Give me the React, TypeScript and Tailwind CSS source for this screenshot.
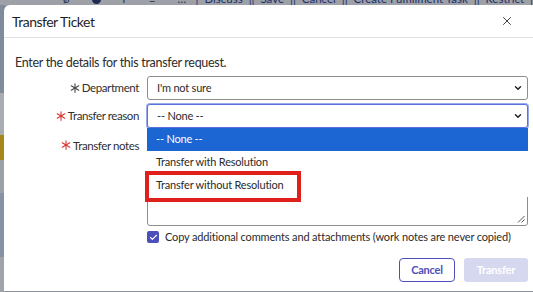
import { ChevronDown, X, Check } from "lucide-react";

function Star({ red }: { red?: boolean }) {
  return (
    <svg width="10" height="10" viewBox="0 0 12 12" className={red ? "text-[#d8322f]" : "text-[#444]"}>
      <g stroke="currentColor" strokeWidth="1.3" strokeLinecap="round">
        <line x1="6" y1="0.8" x2="6" y2="11.2" />
        <line x1="1.5" y1="3.4" x2="10.5" y2="8.6" />
        <line x1="1.5" y1="8.6" x2="10.5" y2="3.4" />
      </g>
    </svg>
  );
}

function Label({ text, red, className }: { text: string; red?: boolean; className?: string }) {
  return (
    <div
      className={
        "w-[143px] shrink-0 flex items-center justify-end gap-[2px] pr-[8px] text-[11.5px] tracking-[-0.4px] text-[#2f2f2f] " +
        (className ?? "")
      }
    >
      <Star red={red} />
      <span>{text}</span>
    </div>
  );
}

function Select({ value, focused }: { value: string; focused?: boolean }) {
  return (
    <div
      className={
        "w-[381px] h-[24px] rounded-[3px] flex items-center justify-between pl-[9px] pr-[4px] text-[11px] tracking-[-0.2px] text-[#2b2b2b] bg-white border " +
        (focused ? "border-[#5b73d9] shadow-[0_0_0_1px_#9aabea]" : "border-[#8d8d8d]")
      }
    >
      <span>{value}</span>
      <ChevronDown size={10} strokeWidth={3.5} className="text-[#222]" />
    </div>
  );
}

export default function App() {
  return (
    <div className="relative w-[533px] h-[292px] overflow-hidden bg-[#8a9097] font-['Lato','Open_Sans',sans-serif]">
      {/* page behind the modal */}
      <div className="absolute left-0 top-[-8px] w-full h-[14px] bg-[#9da1a7] flex items-center whitespace-nowrap text-[11.5px] text-[#1e2f6b]">
        <div className="w-[197px] flex items-center gap-[22px] pl-[63px] text-[#2a2f45]">
          <span>ø</span>
          <span className="w-[9px] h-[9px] rounded-full bg-[#1e2a55]" />
          <span>r</span>
          <span>≡</span>
          <span>…</span>
        </div>
        <div className="flex items-center gap-[6px]">
          <span>|</span>
          <span>Discuss</span>
          <span>||</span>
          <span>Save</span>
          <span>||</span>
          <span>Cancel</span>
          <span>||</span>
          <span>Create Fulfillment Task</span>
          <span>||</span>
          <span>Restrict</span>
          <span>|</span>
        </div>
      </div>
      <div className="absolute left-0 top-[5px] w-[5px] h-[287px] flex flex-col">
        <div className="h-[88px] bg-[#7f8c9c]" />
        <div className="h-[42px] bg-[#a9adb2]" />
        <div className="h-[25px] bg-[#a8871a]" />
        <div className="h-[33px] bg-[#9ca1a7]" />
        <div className="h-[64px] bg-[#8593a5]" />
        <div className="flex-1 bg-[#a0a4a9]" />
      </div>

      {/* modal */}
      <div className="absolute left-[4px] top-[5px] w-[560px] h-[286px] bg-white rounded-tl-[6px] flex flex-col text-[#2b2b2b]">
        <div className="h-[33px] shrink-0 border-b border-[#e2e2e2] flex items-center pl-[8px]">
          <span className="text-[14px] tracking-[-0.5px] text-[#1f1f1f]">Transfer Ticket</span>
          <X size={14} strokeWidth={1.6} className="ml-auto mr-[50px] text-[#333]" />
        </div>

        <div className="pl-[11px] pt-[16px] text-[12.5px] tracking-[-0.3px]">Enter the details for this transfer request.</div>

        <div className="mt-[3px] flex flex-col gap-[4px]">
          <div className="flex items-center">
            <Label text="Department" />
            <Select value="I'm not sure" />
          </div>

          <div className="relative flex items-center">
            <Label text="Transfer reason" red />
            <Select value="-- None --" focused />
            {/* open dropdown list */}
            <div className="absolute left-[143px] top-[24px] w-[381px] z-10 bg-white text-[11px] tracking-[-0.2px]">
              <div className="h-[23px] bg-[#1b66d2] text-white flex items-center pl-[9px]">-- None --</div>
              <div className="h-[23px] flex items-center pl-[9px]">Transfer with Resolution</div>
              <div className="h-[23px] flex items-center pl-[9px]">Transfer without Resolution</div>
            </div>
            <div className="absolute left-[141px] top-[67px] w-[156px] h-[31px] z-20 border-[4px] border-[#e0201b]" />
          </div>

          <div className="flex items-start mt-[1px]">
            <Label text="Transfer notes" red className="mt-[4px]" />
            <div className="relative w-[381px] h-[93px] rounded-[3px] border border-[#8d8d8d] bg-white">
              <svg width="8" height="8" viewBox="0 0 8 8" className="absolute right-[2px] bottom-[2px] text-[#555]">
                <g stroke="currentColor" strokeWidth="1">
                  <line x1="7.5" y1="1" x2="1" y2="7.5" />
                  <line x1="7.5" y1="4.5" x2="4.5" y2="7.5" />
                </g>
              </svg>
            </div>
          </div>
        </div>

        <div className="mt-[3px] pl-[143px] flex items-center gap-[6px] text-[11px] tracking-[-0.15px] whitespace-nowrap">
          <div className="w-[12px] h-[12px] rounded-[2px] bg-[#4d50b8] flex items-center justify-center">
            <Check size={9} strokeWidth={3} className="text-white" />
          </div>
          <span>Copy additional comments and attachments (work notes are never copied)</span>
        </div>

        <div className="mt-[13px] pl-[395px] flex items-center gap-[9px]">
          <button className="w-[56px] h-[24px] rounded-[4px] border border-[#4d50b8] text-[#4d50b8] text-[11px] tracking-[-0.2px] font-bold bg-white">
            Cancel
          </button>
          <button className="w-[64px] h-[24px] rounded-[3px] bg-[#d6d8f0] text-white text-[11px] tracking-[-0.2px] font-bold">
            Transfer
          </button>
        </div>
      </div>
    </div>
  );
}
